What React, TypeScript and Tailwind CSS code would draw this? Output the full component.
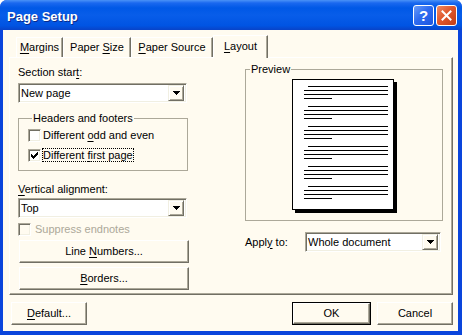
import type { ReactNode } from "react";

function U({ children }: { children: ReactNode }) {
  return <span className="underline decoration-1 underline-offset-[2px]">{children}</span>;
}

function Arrow() {
  return (
    <svg width="7" height="4" viewBox="0 0 7 4" shapeRendering="crispEdges">
      <path d="M0 0h7v1h-1v1h-1v1h-1v1h-1v-1h-1v-1h-1v-1h-1z" fill="#000" />
    </svg>
  );
}

function Combo({ value, className = "" }: { value: string; className?: string }) {
  return (
    <div
      className={`flex h-[20px] items-center bg-white p-[2px] border border-t-[#aca899] border-l-[#aca899] border-r-white border-b-white shadow-[inset_1px_1px_0_#716f64,inset_-1px_-1px_0_#f1efe2] ${className}`}
    >
      <span className="flex-1 leading-[14px]">{value}</span>
      <span className="flex h-[16px] w-[16px] items-center justify-center bg-[#fffbf0] border border-t-[#f1efe2] border-l-[#f1efe2] border-r-[#716f64] border-b-[#716f64] shadow-[inset_1px_1px_0_#ffffff,inset_-1px_-1px_0_#aca899]">
        <Arrow />
      </span>
    </div>
  );
}

function Check({ checked = false, disabled = false }: { checked?: boolean; disabled?: boolean }) {
  return (
    <span
      className={`flex h-[13px] w-[13px] shrink-0 items-center justify-center border border-t-[#aca899] border-l-[#aca899] border-r-white border-b-white shadow-[inset_1px_1px_0_#716f64,inset_-1px_-1px_0_#f1efe2] ${
        disabled ? "bg-[#fffbf0]" : "bg-white"
      }`}
    >
      {checked && (
        <svg width="7" height="7" viewBox="0 0 7 7" shapeRendering="crispEdges">
          <path d="M6 0h1v3h-1v1h-1v1h-1v1h-1v1h-1v-1h-1v-1h-1v-3h1v1h1v1h1v-1h1v-1h1z" fill="#000" />
        </svg>
      )}
    </span>
  );
}

function Btn({ children, className = "", def = false }: { children: ReactNode; className?: string; def?: boolean }) {
  const inner = (
    <div className="flex h-full w-full items-center justify-center bg-[#fffbf0] border border-t-white border-l-white border-r-[#716f64] border-b-[#716f64] shadow-[inset_-1px_-1px_0_#aca899]">
      <span>{children}</span>
    </div>
  );
  if (def) {
    return <div className={`h-[23px] border border-black ${className}`}>{inner}</div>;
  }
  return <div className={`h-[23px] ${className}`}>{inner}</div>;
}

function Tab({ children, w, active = false }: { children: ReactNode; w: string; active?: boolean }) {
  return (
    <div
      className={`flex items-center justify-center border-t border-l border-white border-r border-r-[#716f64] shadow-[inset_-1px_0_0_#aca899] ${w} ${
        active ? "relative z-10 -mb-px h-[23px] bg-[#fffbf0]" : "h-[20px]"
      }`}
    >
      <span className={active ? "-mt-[2px]" : ""}>{children}</span>
    </div>
  );
}

function Preview() {
  const para = [0, 1, 2, 3, 4, 5];
  return (
    <div className="ml-[46px] mt-[3px] flex h-[131px] w-[102px] flex-col gap-[7px] border border-black bg-white pt-[6px] shadow-[3px_3px_0_#000]">
      {para.map((p) => (
        <div key={p} className="flex flex-col gap-[3px] pl-[11px]">
          <div className="ml-[4px] h-px w-[80px] bg-black" />
          <div className="h-px w-[84px] bg-black" />
          <div className="h-px w-[84px] bg-black" />
          <div className="h-px w-[28px] bg-black" />
        </div>
      ))}
    </div>
  );
}

export default function App() {
  return (
    <div className="h-[335px] w-[462px] bg-white text-[11px] leading-[13px] text-black font-['Liberation_Sans',Arial,sans-serif]">
      <div className="flex h-full w-full flex-col overflow-hidden rounded-t-[7px] bg-[#0a45dc]">
        {/* title bar */}
        <div className="flex h-[30px] shrink-0 items-center bg-[linear-gradient(180deg,#4a92f7_0px,#1a68ef_3px,#0058e6_8px,#085de9_50%,#0054e3_85%,#0843c8_100%)] pl-[7px] pr-[5px]">
          <span className="flex-1 pt-[2px] text-[13px] font-bold text-white [text-shadow:1px_1px_0_#0a2a8a]">
            Page Setup
          </span>
          <div className="flex h-[21px] w-[21px] items-center justify-center rounded-[3px] border border-white bg-[linear-gradient(135deg,#6a9cf8_0%,#2f6cf0_45%,#1c55e0_100%)]">
            <span className="text-[15px] font-bold leading-none text-white">?</span>
          </div>
          <div className="ml-[2px] flex h-[21px] w-[21px] items-center justify-center rounded-[3px] border border-white bg-[linear-gradient(135deg,#f08a62_0%,#e0582e_45%,#c23d16_100%)]">
            <svg width="11" height="11" viewBox="0 0 11 11">
              <path d="M1.5 1.5l8 8M9.5 1.5l-8 8" stroke="#fff" strokeWidth="2" strokeLinecap="square" />
            </svg>
          </div>
        </div>

        {/* client area */}
        <div className="ml-[3px] mr-[4px] mb-[4px] flex flex-1 flex-col bg-[#fffbf0]">
          <div className="ml-[13px] mt-[5px] flex items-end">
            <Tab w="w-[47px]">
              <U>M</U>argins
            </Tab>
            <Tab w="w-[68px]">
              Paper <U>S</U>ize
            </Tab>
            <Tab w="w-[82px]">
              <U>P</U>aper Source
            </Tab>
            <Tab w="w-[55px]" active>
              <U>L</U>ayout
            </Tab>
          </div>

          <div className="ml-[6px] flex h-[238px] w-[444px] border-t border-l border-white border-r border-b border-r-[#716f64] border-b-[#716f64] pl-[8px] shadow-[inset_-1px_-1px_0_#aca899]">
            {/* left column */}
            <div className="flex w-[170px] flex-col">
              <div className="mt-[8px] h-[13px]">
                Section star<U>t</U>:
              </div>
              <Combo value="New page" className="mt-[4px] w-[169px]" />

              <fieldset className="mt-[9px] w-[170px] border border-[#aca899] pb-[8px] pl-[9px]">
                <legend className="ml-[4px] px-[1px] leading-[13px]">Headers and footers</legend>
                <div className="mt-[4px] flex h-[13px] items-center gap-[1px]">
                  <Check />
                  <span className="border border-transparent leading-[11px]">
                    Different <U>o</U>dd and even
                  </span>
                </div>
                <div className="mt-[6px] flex h-[14px] items-center gap-[1px]">
                  <Check checked />
                  <span className="border border-dotted border-black leading-[12px]">
                    Different <U>f</U>irst page
                  </span>
                </div>
              </fieldset>

              <div className="mt-[12px] h-[13px]">
                <U>V</U>ertical alignment:
              </div>
              <Combo value="Top" className="mt-[2px] w-[169px]" />

              <div className="mt-[5px] flex h-[13px] items-center gap-[4px] text-[#aca899]">
                <Check disabled />
                <span>Suppress endnotes</span>
              </div>

              <Btn className="ml-[1px] mt-[4px] w-[170px]">
                Line <U>N</U>umbers...
              </Btn>
              <Btn className="ml-[1px] mt-[4px] w-[170px]">
                <U>B</U>orders...
              </Btn>
            </div>

            {/* right column */}
            <div className="ml-[57px] flex w-[198px] flex-col">
              <fieldset className="mt-[5px] w-[198px] border border-[#aca899] pb-[10px]">
                <legend className="ml-[4px] px-[1px] leading-[13px]">Preview</legend>
                <Preview />
              </fieldset>

              <div className="mt-[11px] flex items-center">
                <span className="w-[60px]">
                  Appl<U>y</U> to:
                </span>
                <Combo value="Whole document" className="w-[136px]" />
              </div>
            </div>
          </div>

          {/* bottom buttons */}
          <div className="mt-[7px] mr-[5px] flex items-center">
            <Btn className="ml-[8px] w-[76px]">
              <U>D</U>efault...
            </Btn>
            <div className="flex-1" />
            <Btn def className="w-[79px]">
              OK
            </Btn>
            <Btn className="ml-[6px] w-[76px]">Cancel</Btn>
          </div>
        </div>
      </div>
    </div>
  );
}
